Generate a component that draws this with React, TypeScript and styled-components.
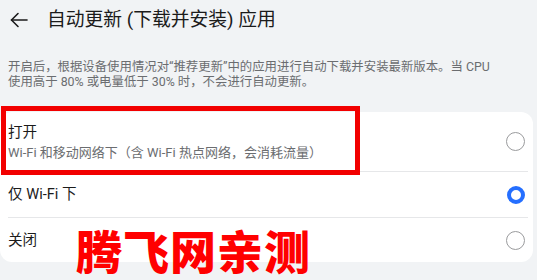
import React from "react";
import styled, { createGlobalStyle } from "styled-components";

const Global = createGlobalStyle`
  html, body { margin: 0; padding: 0; background: #f1f3f5; }
  body { font-family: Roboto, "Noto Sans CJK SC", sans-serif; }
`;

const Page = styled.div`
  position: relative;
  width: 537px;
  height: 280px;
  overflow: hidden;
  background: #f1f3f5;
`;

const Header = styled.div`
  display: flex;
  align-items: center;
  height: 40px;
  padding-left: 9px;
  gap: 18px;
`;

const BackButton = styled.div`
  display: flex;
  align-items: center;
  justify-content: center;
  width: 20px;
  height: 20px;
`;

const Title = styled.h1`
  margin: 0;
  font-size: 18.8px;
  font-weight: 400;
  color: #1b1b1b;
  line-height: 24px;
`;

const Description = styled.p`
  margin: 19px 0 0 0;
  padding: 0 8px;
  font-size: 12.4px;
  line-height: 15px;
  color: #6b6d70;
`;

const Card = styled.div`
  margin-top: 23px;
  width: 533px;
  background: #ffffff;
  border-radius: 12px;
  display: flex;
  flex-direction: column;
`;

const Row = styled.div<{ $h: number; $divider?: boolean }>`
  display: flex;
  align-items: center;
  justify-content: space-between;
  height: ${(p) => p.$h}px;
  margin: 0 5px 0 8px;
  border-bottom: ${(p) => (p.$divider ? "1px solid #e6e7e9" : "none")};
  box-sizing: border-box;
`;

const Texts = styled.div`
  display: flex;
  flex-direction: column;
  gap: 2px;
`;

const Label = styled.div`
  font-size: 14.6px;
  line-height: 19px;
  color: #1b1b1b;
`;

const Sub = styled.div`
  font-size: 13px;
  line-height: 17px;
  color: #6b6d70;
`;

const Radio = styled.span<{ $on?: boolean }>`
  width: ${(p) => (p.$on ? 10 : 17)}px;
  height: ${(p) => (p.$on ? 10 : 17)}px;
  border-radius: 50%;
  border: ${(p) => (p.$on ? "4px solid #256fff" : "1px solid #9a9b9d")};
  margin-right: 3px;
  flex: none;
`;

const Highlight = styled.div`
  position: absolute;
  left: 1px;
  top: 106px;
  width: 349px;
  height: 59px;
  border: 5px solid #f20000;
  pointer-events: none;
`;

const Watermark = styled.div`
  position: absolute;
  left: 76px;
  top: 224px;
  font-family: "Noto Sans CJK SC", sans-serif;
  font-weight: 900;
  font-size: 46px;
  line-height: 50px;
  letter-spacing: 1px;
  color: #ff0000;
  white-space: nowrap;
`;

export default function App() {
  return (
    <Page>
      <Global />
      <Header>
        <BackButton>
          <svg width="20" height="20" viewBox="0 0 20 20" fill="none" stroke="#1b1b1b" strokeWidth="1.6" strokeLinecap="round" strokeLinejoin="round">
            <path d="M18 10H2.5" />
            <path d="M9 3.5L2.5 10L9 16.5" />
          </svg>
        </BackButton>
        <Title>自动更新 (下载并安装) 应用</Title>
      </Header>
      <Description>
        开启后，根据设备使用情况对“推荐更新”中的应用进行自动下载并安装最新版本。当 CPU
        <br />
        使用高于 80% 或电量低于 30% 时，不会进行自动更新。
      </Description>
      <Card>
        <Row $h={60} $divider>
          <Texts>
            <Label>打开</Label>
            <Sub>Wi-Fi 和移动网络下（含 Wi-Fi 热点网络，会消耗流量）</Sub>
          </Texts>
          <Radio />
        </Row>
        <Row $h={46} $divider>
          <Label>仅 Wi-Fi 下</Label>
          <Radio $on />
        </Row>
        <Row $h={44}>
          <Label>关闭</Label>
          <Radio />
        </Row>
      </Card>
      <Highlight />
      <Watermark>腾飞网亲测</Watermark>
    </Page>
  );
}
